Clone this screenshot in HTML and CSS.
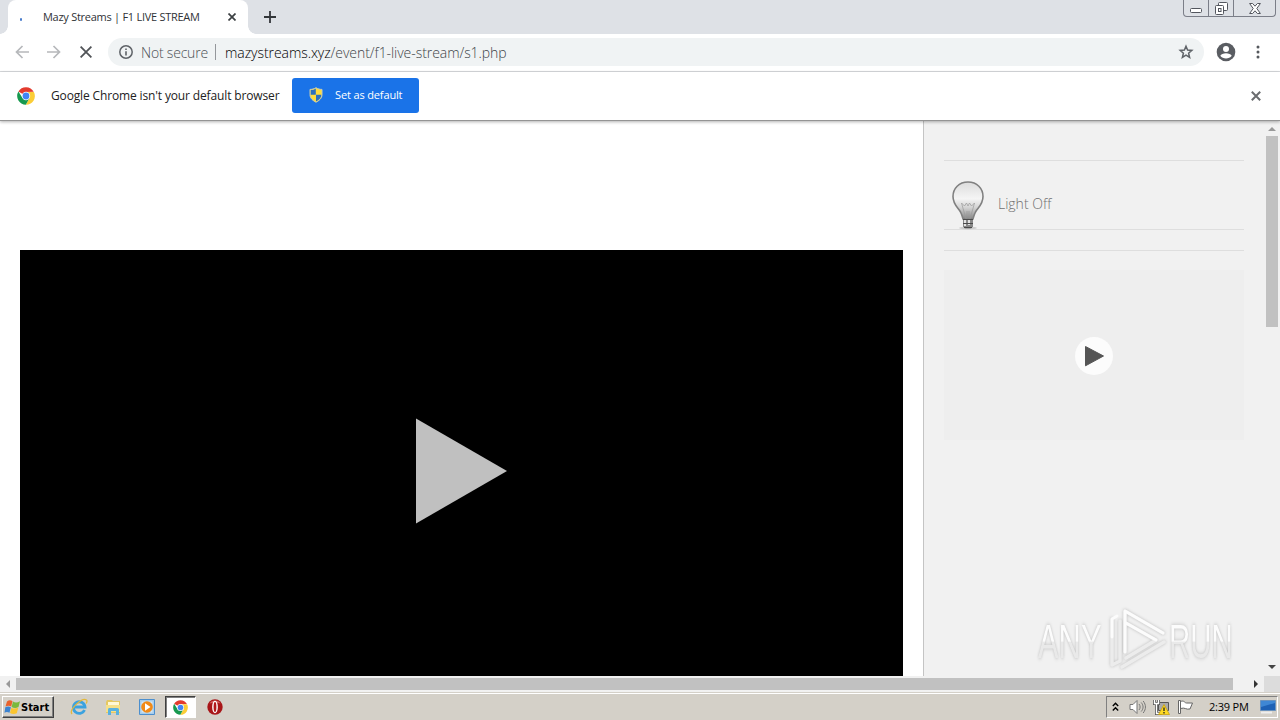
FILE: index.html
```html
<!DOCTYPE html>
<html lang="en">
<head>
  <meta charset="UTF-8" />
  <title>Mazy Streams | F1 LIVE STREAM</title>
  <link rel="stylesheet" href="styles.css">
</head>
<body>
  <svg class="defs" width="0" height="0">
    <symbol id="chrome" viewBox="0 0 18 18">
      <path fill="#e33b2e" d="M9 9L1.4 4.5A8.8 8.8 0 0 1 16.7 4.8L9 5z" />
      <path fill="#fbcd37" d="M9 5h7.9A8.8 8.8 0 0 1 8.8 17.8L12.6 11z" />
      <path fill="#17994f" d="M1.4 4.5A8.8 8.8 0 0 0 8.8 17.8L12.5 11 5.5 11z" />
      <circle cx="9" cy="9" r="4.2" fill="#fff" />
      <circle cx="9" cy="9" r="3.4" fill="#4285f4" />
    </symbol>
  </svg>

  <header class="tabstrip">
    <div class="tab">
      <span class="loading-dot"></span>
      <span class="tab-title">Mazy Streams | F1 LIVE STREAM</span>
      <svg class="tab-close" width="8" height="8" viewBox="0 0 8 8"><path d="M.5.5l7 7M7.500.5l-7 7" stroke="#3c4043" stroke-width="1.7" /></svg>
    </div>
    <svg class="new-tab" width="12" height="12" viewBox="0 0 12 12"><path d="M6 0v12M0 6h12" stroke="#33363a" stroke-width="1.8" /></svg>
    <div class="window-buttons">
      <span class="win-min"><svg width="12" height="5" viewBox="0 0 12 5"><rect x=".5" y=".5" width="11" height="4" rx="1" fill="#fff" stroke="#53565e" /></svg></span>
      <span class="win-max"><svg width="13" height="13" viewBox="0 0 13 13" fill="#fff" stroke="#53565e"><rect x="3.500" y=".5" width="9" height="8" rx="1" /><rect x=".5" y="3.500" width="8" height="9" rx="1" /><rect x="3.500" y="6.500" width="2.500" height="3" /></svg></span>
      <span class="win-close"><svg width="12" height="11" viewBox="0 0 12 11"><path d="M.6.5h3L6 3.200 8.400.5h3L7.800 5.500l3.600 5h-3L6 7.800l-2.400 2.700h-3l3.600-5z" fill="#fff" stroke="#53565e" /></svg></span>
    </div>
  </header>

  <div class="toolbar">
    <svg class="back" width="14" height="14" viewBox="0 0 14 14" fill="none" stroke="#b6b8bb" stroke-width="1.700"><path d="M14 7H1.500M7.500 1L1.500 7l6 6" /></svg>
    <svg class="forward" width="14" height="14" viewBox="0 0 14 14" fill="none" stroke="#b6b8bb" stroke-width="1.700"><path d="M0 7h12.500M6.500 1l6 6-6 6" /></svg>
    <svg class="stop" width="12" height="12" viewBox="0 0 12 12" stroke="#505357" stroke-width="1.800"><path d="M.6.6l10.800 10.800M11.400.6L.6 11.400" /></svg>
    <div class="omnibox">
      <svg class="info" width="14" height="14" viewBox="0 0 14 14"><circle cx="7" cy="7" r="6.200" fill="none" stroke="#5f6368" stroke-width="1.500" /><path d="M7 6.200v4.300M7 3.500v1.500" stroke="#5f6368" stroke-width="1.600" /></svg>
      <span class="not-secure">Not secure</span>
      <span class="separator"></span>
      <span class="url"><b>mazystreams.xyz</b>/event/f1-live-stream/s1.php</span>
      <svg class="star" width="16" height="16" viewBox="0 0 16 16"><path d="M8 2.200l1.600 3.900 4.200.3-3.200 2.800 1 4.100L8 11.100l-3.600 2.200 1-4.100-3.200-2.800 4.200-.3z" fill="none" stroke="#5f6368" stroke-width="1.500" /></svg>
    </div>
    <svg class="profile" width="20" height="20" viewBox="0 0 20 20"><circle cx="10" cy="10" r="9.300" fill="#5a5d62" /><circle cx="10" cy="7" r="3" fill="#fff" /><path d="M4.300 13.800c1.200-3.400 10.200-3.400 11.400 0-2.500 3.600-8.900 3.600-11.400 0z" fill="#fff" /></svg>
    <svg class="menu" width="4" height="14" viewBox="0 0 4 14" fill="#55585d"><circle cx="2" cy="2" r="1.500" /><circle cx="2" cy="7" r="1.500" /><circle cx="2" cy="12" r="1.500" /></svg>
  </div>

  <div class="infobar">
    <svg class="chrome-icon" width="18" height="18"><use href="#chrome" /></svg>
    <span class="infobar-text">Google Chrome isn't your default browser</span>
    <button class="default-button">
      <svg width="14" height="16" viewBox="0 0 14 16"><path d="M7 .7C5 2 3 2.400 1 2.400v5.300c0 3.700 3 6 6 7.500 3-1.500 6-3.800 6-7.500V2.400C11 2.400 9 2 7 .7z" fill="#ffdc3c" /><path d="M6.800 1.500v6.200H1.500V3C3.500 3 5.200 2.500 6.800 1.500zM7 7.700h5.500c-.2 3.200-2.500 5.300-5.500 6.800z" fill="#2c70bd" /><path d="M7 .7C5 2 3 2.400 1 2.400v5.300c0 3.700 3 6 6 7.500 3-1.500 6-3.800 6-7.500V2.400C11 2.400 9 2 7 .7z" fill="none" stroke="#c5ccb5" /></svg>
      <span>Set as default</span>
    </button>
    <svg class="infobar-close" width="10" height="10" viewBox="0 0 10 10"><path d="M.8.8l8.400 8.400M9.200.8L.8 9.200" stroke="#6a6c6f" stroke-width="2" /></svg>
  </div>

  <div class="viewport">
    <main class="page">
      <div class="player">
        <svg width="92" height="106" viewBox="0 0 92 106"><path d="M0 .5l91 52.500L0 105.500z" fill="#c0c0c0" /></svg>
      </div>
    </main>
    <aside class="sidebar">
      <div class="light-switch">
        <svg class="bulb" width="34" height="50" viewBox="0 0 34 50">
          <defs>
            <linearGradient id="glass" x1="0" y1="0" x2="0" y2="1">
              <stop offset="0" stop-color="#dcdcdc" />
              <stop offset=".45" stop-color="#f5f5f5" />
              <stop offset=".7" stop-color="#d2d2d2" />
              <stop offset="1" stop-color="#858585" />
            </linearGradient>
          </defs>
          <ellipse cx="17" cy="47" rx="9" ry="1.500" fill="#ccc" />
          <path d="M17 1C8 1 2 7.500 2 15.500c0 8 5 11 7.500 15.500 1.300 2.500 1.800 4.500 2.500 7h10c.7-2.500 1.200-4.500 2.500-7C27 26.500 32 23.500 32 15.500 32 7.500 26 1 17 1z" fill="url(#glass)" stroke="#808080" stroke-width="1.600" />
          <path d="M15 38l-4.500-16 3 3 2-3 1.500 3 1.500-3 2 3 3-3L19 38M16 38v-8M18 38v-8" fill="none" stroke="#999" stroke-width=".7" />
          <path d="M12 38h10v7.500l-2 2h-6l-2-2z" fill="#888" />
          <path d="M14 39v6M18 39v5" stroke="#e2e2e2" stroke-width="2" />
          <path d="M12 38.500h10M12 42.500h10M13 46.500h8" stroke="#4a4a4a" stroke-width="1.200" />
        </svg>
        <span>Light Off</span>
      </div>
      <div class="ad">
        <svg width="38" height="38" viewBox="0 0 38 38"><circle cx="19" cy="19" r="19" fill="#fcfcfc" /><path d="M10.500 9.500l18 9.500-18 9.800z" fill="#555" stroke="#555" stroke-linejoin="round" /></svg>
      </div>
      <div class="watermark">
        <span>ANY</span>
        <svg width="60" height="64" viewBox="0 0 60 64" fill="none" stroke-linejoin="round" stroke-linecap="round">
          <g class="mark-edge" stroke="#ececec" stroke-width="3.500">
            <path d="M17 45V4l38 22M18 16l30 17-30 18M4 12v46l8-4V14M14 60l42-25" />
          </g>
          <path d="M17 45V4l38 22M4 30V12l5-3M18 16l30 17" stroke="#fcfcfc" stroke-width="2.800" />
        </svg>
        <span class="run">RUN</span>
      </div>
    </aside>
    <div class="vscroll">
      <svg width="8" height="4" viewBox="0 0 8 4"><path d="M0 4l4-4 4 4z" fill="#999" /></svg>
      <div class="vthumb"></div>
      <svg class="scroll-down" width="8" height="4" viewBox="0 0 8 4"><path d="M0 0l4 4 4-4z" fill="#444" /></svg>
    </div>
  </div>

  <div class="hscroll">
    <svg width="4" height="8" viewBox="0 0 4 8"><path d="M4 0L0 4l4 4z" fill="#999" /></svg>
    <div class="hthumb"></div>
    <svg class="scroll-right" width="4" height="8" viewBox="0 0 4 8"><path d="M0 0l4 4-4 4z" fill="#333" /></svg>
    <div class="corner"></div>
  </div>

  <footer class="taskbar">
    <div class="start">
      <svg width="17" height="16" viewBox="0 0 16 16"><path d="M2.500 2.500C4.500 1 6.200 1 8 2.300L6.700 7.500C4.900 6.300 3 6.500 1 7.500z" fill="#e9622c" /><path d="M8.500 2.600c2 1.200 4.500 1.200 7-.4L14 8c-2.300 1.400-4.800 1.200-6.900 0z" fill="#7ab93c" /><path d="M.8 8.200c2-1 3.700-1 5.600 0L5 13.800c-1.800-1-3.500-1-5 0z" fill="#3c83d0" /><path d="M6.900 8.700c2 1.200 4.400 1.100 6.900-.2l-1.500 5.700c-2.300 1.200-4.800 1-6.800-.2z" fill="#fbc52f" /></svg>
      <span>Start</span>
    </div>
    <div class="quick">
      <svg width="18" height="18" viewBox="0 0 18 18" fill="none"><path d="M14.500 12A5.800 5.800 0 1 1 15 9H5" stroke="#3ba2df" stroke-width="2.800" /><path d="M2 16C-1.500 12 12-1 16.500 2c1 .8.500 2-.3 3.500" stroke="#e3b83c" stroke-width="1.300" /></svg>
      <svg width="18" height="18" viewBox="0 0 18 18"><path d="M2 4l1-2h5l1 1h7v12H2z" fill="#e5c862" /><path d="M4 4h11v4H4z" fill="#fff8d6" /><path d="M2 7h14v7H2z" fill="#f5e08a" /><path d="M4 17v-5c0-2 1-2 2-2h7c2 0 2 1 2 2v5h-3v-4H7v4z" fill="#59b1df" /></svg>
      <svg width="18" height="18" viewBox="0 0 18 18"><path d="M1.500 1.500h15v15h-15z" fill="#a6cdec" stroke="#4c8fce" /><path d="M3.500 3.500h11v11h-11z" fill="#d4e6f5" /><circle cx="9" cy="9" r="5.800" fill="#f18a17" /><path d="M7 5.300L12.500 9 7 12.700z" fill="#fff" /></svg>
      <div class="task-active"><svg width="15" height="15"><use href="#chrome" /></svg></div>
      <svg width="18" height="18" viewBox="0 0 18 18"><circle cx="9" cy="9" r="7.700" fill="#a81518" /><path d="M3.500 5.500c2-4 9-4 11 0-3-1-8-1-11 0z" fill="#d35a5a" /><path d="M9 2.800c3.800 0 3.800 12.400 0 12.400S5.200 2.800 9 2.800z" fill="#fff" /><ellipse cx="9" cy="9" rx="1.400" ry="5" fill="#b3171b" /></svg>
    </div>
    <div class="tray">
      <svg class="chevrons" width="7" height="10" viewBox="0 0 7 10" fill="none" stroke="#000" stroke-width="1.400"><path d="M.8 4l2.700-2.700L6.200 4M.8 8.500l2.700-2.700 2.700 2.700" /></svg>
      <svg class="sound" width="17" height="16" viewBox="0 0 17 16" fill="#fff" stroke="#777"><path d="M1 5.500h3L8 1.500v13l-4-4H1z" /><path d="M10 5c1.500 2 1.500 4 0 6M12.200 3.500c2.500 3 2.500 6 0 9M14.200 2c3 4 3 8 0 12" fill="none" /></svg>
      <svg class="network" width="17" height="16" viewBox="0 0 17 16"><path d="M5.500 3.500h10v8h-10z" fill="#aaa" stroke="#555" /><path d="M1.500 1v3.500h4V1M3.500 4.500v10h5" fill="none" stroke="#555" stroke-width="3" /><path d="M1.500 1v3.500h4V1M3.500 4.500v10h5" fill="none" stroke="#fff" stroke-width="1.400" /><path d="M11 5.500l5.500 10h-11z" fill="#ffda22" stroke="#c69c00" stroke-width=".7" /><path d="M11 8.500v3.500M11 13v1.500" stroke="#222" stroke-width="1.300" /></svg>
      <svg class="flag" width="17" height="16" viewBox="0 0 17 16"><path d="M1.500 1.500h2v13h-2zM3.500 2.500c4-1.500 4 1.500 6 1.500h6L13 10c-4 1-5-2-9.500-.5z" fill="#fff" stroke="#666" /></svg>
      <span class="clock">2:39 PM</span>
      <svg class="desktop" width="16" height="14" viewBox="0 0 16 14"><path d="M.5.5h15v10H.5z" fill="#1e61b5" stroke="#6c93bd" /><path d="M1 1h14v2L1 7z" fill="#3f87d4" /><path d="M1 12.500h11" stroke="#eee" stroke-width="2" /></svg>
    </div>
  </footer>
</body>
</html>
```

FILE: styles.css
```css
* {
  margin: 0;
  padding: 0;
  box-sizing: border-box;
}

body {
  width: 1280px;
  height: 720px;
  overflow: hidden;
  display: flex;
  flex-direction: column;
  background: #fff;
  font-family: "Open Sans", "Noto Sans", sans-serif;
  font-size: 11px;
  white-space: nowrap;
}

svg {
  display: block;
  flex-shrink: 0;
}

.defs {
  position: absolute;
}

.tabstrip {
  height: 34px;
  flex-shrink: 0;
  background: #dee1e6;
  display: flex;
  padding-left: 8px;
}

.tab {
  position: relative;
  width: 240px;
  height: 34px;
  background: #fff;
  border-radius: 8px 8px 0 0;
  display: flex;
  align-items: center;
  padding-left: 12px;
}

.tab::before,
.tab::after {
  content: "";
  position: absolute;
  bottom: 0;
  width: 8px;
  height: 8px;
}

.tab::before {
  left: -8px;
  background: radial-gradient(circle at 0 0, #dee1e6 7.5px, #fff 8px);
}

.tab::after {
  right: -8px;
  background: radial-gradient(circle at 100% 0, #dee1e6 7.5px, #fff 8px);
}

.loading-dot {
  width: 2px;
  height: 3px;
  margin-top: 5px;
  border-radius: 1px;
  background: #4a7dcc;
}

.tab-title {
  width: 157px;
  margin: -1px 0 0 21px;
  color: #2f3236;
  letter-spacing: -0.27px;
}

.tab-close {
  margin-left: 28px;
}

.new-tab {
  margin: 11px 0 0 16px;
}

.window-buttons {
  display: flex;
  width: 93px;
  height: 17px;
  margin-left: auto;
  margin-right: 4px;
  border: 1px solid #7b7e88;
  border-top: 0;
  border-radius: 0 0 4px 4px;
}

.window-buttons span {
  display: flex;
  justify-content: center;
  align-items: center;
  border-right: 1px solid #7b7e88;
}

.win-min {
  width: 25px;
}

.win-min svg {
  margin-top: 4px;
}

.win-max {
  width: 25px;
}

.window-buttons .win-close {
  width: 41px;
  border-right: 0;
}

.toolbar {
  height: 38px;
  flex-shrink: 0;
  border-bottom: 1px solid #d9dbde;
  display: flex;
  align-items: center;
  padding: 0 0 1px 15px;
}

.forward {
  margin-left: 18px;
}

.stop {
  margin-left: 19px;
}

.omnibox {
  width: 1096px;
  height: 28px;
  margin-left: 16px;
  border-radius: 14px;
  background: #f0f3f4;
  display: flex;
  align-items: center;
  padding: 0 10px 0 11px;
  font-size: 14px;
  font-weight: 300;
}

.not-secure {
  width: 67px;
  margin-left: 8px;
  color: #4c5054;
  letter-spacing: -0.2px;
}

.separator {
  width: 1px;
  height: 16px;
  margin: 0 9px 0 7px;
  background: #94979b;
}

.url {
  color: #404448;
  letter-spacing: -0.06px;
}

.url b {
  font-weight: 300;
  color: #000;
}

.star {
  margin-left: auto;
}

.profile {
  margin-left: 12px;
}

.menu {
  margin-left: 20px;
}

.infobar {
  position: relative;
  z-index: 1;
  height: 49px;
  flex-shrink: 0;
  display: flex;
  align-items: center;
  padding: 0 19px 0 17px;
  background: #fff;
  border-bottom: 1px solid #949494;
  box-shadow: 0 1px 3px rgba(0, 0, 0, 0.3);
}

.infobar-text {
  width: 229px;
  margin: -2px 0 0 16px;
  font-size: 12px;
  letter-spacing: -0.14px;
  color: #222;
}

.default-button {
  width: 127px;
  height: 35px;
  margin: -2px 0 0 12px;
  border: 0;
  border-radius: 3px;
  background: #1a73e8;
  color: #fff;
  font: 11px "Open Sans", sans-serif;
  letter-spacing: -0.14px;
  display: flex;
  align-items: center;
  padding-left: 17px;
}

.default-button span {
  margin: -2px 0 0 12px;
}

.infobar-close {
  margin-left: auto;
}

.viewport {
  height: 555px;
  flex-shrink: 0;
  display: flex;
}

.page {
  width: 924px;
  padding: 129px 20px 0;
  border-right: 1px solid #c4c4c4;
}

.player {
  height: 426px;
  background: #000;
  display: flex;
  padding: 168px 0 0 396px;
}

.sidebar {
  position: relative;
  width: 340px;
  padding: 39px 20px 0;
  background: #f1f1f1;
}

.light-switch {
  height: 70px;
  border-top: 1px solid #dedede;
  border-bottom: 1px solid #dedede;
  display: flex;
  padding: 20px 0 0 7px;
  font-size: 14px;
  font-weight: 300;
  color: #707070;
}

.light-switch span {
  margin: 13px 0 0 13px;
}

.ad {
  height: 190px;
  margin-top: 20px;
  border-top: 1px solid #dedede;
  padding-top: 19px;
  background: #eee content-box;
  display: flex;
  justify-content: center;
}

.ad svg {
  margin-top: 67px;
}

.watermark {
  position: absolute;
  left: 114px;
  top: 488px;
  display: flex;
  align-items: center;
  font: 49px/64px "Liberation Sans", sans-serif;
}

/* text is squeezed, so its box is wider than the room it takes */
.watermark span {
  width: 120px;
  margin-right: -50px;
  transform: scaleX(0.63);
  transform-origin: left;
  color: transparent;
  background: linear-gradient(#fcfcfc 50%, #e9e9e9 52%);
  background-clip: text;
  filter: drop-shadow(0 0 2px #bbb);
}

.watermark .run {
  transform: scaleX(0.6);
}

.mark-edge {
  filter: drop-shadow(0 0 1.5px #bbb);
}

.watermark svg {
  margin: -4px 1px 0 0;
  overflow: visible;
}

.vscroll {
  width: 16px;
  background: #f1f1f1;
  display: flex;
  flex-direction: column;
  align-items: center;
  padding: 6px 0 7px;
}

.vthumb {
  width: 12px;
  height: 191px;
  margin-top: 5px;
  background: #c1c1c1;
}

.scroll-down {
  margin-top: auto;
}

.hscroll {
  height: 16px;
  flex-shrink: 0;
  background: #f1f1f1;
  display: flex;
  align-items: center;
  padding-left: 6px;
}

.hthumb {
  width: 1217px;
  height: 12px;
  margin-left: 6px;
  background: #c1c1c1;
}

.scroll-right {
  margin-left: 21px;
}

.corner {
  width: 16px;
  height: 16px;
  margin-left: auto;
  background: #dcdcdc;
}

.taskbar {
  height: 28px;
  flex-shrink: 0;
  background: #d4d0c8;
  border-top: 1px solid #d4d0c8;
  box-shadow: inset 0 1px #fff;
  display: flex;
  align-items: flex-start;
  padding: 3px 2px 0;
}

.start {
  width: 52px;
  height: 22px;
  border: 1px solid;
  border-color: #fff #404040 #404040 #fff;
  box-shadow: inset -1px -1px #808080;
  display: flex;
  align-items: center;
  padding-left: 1px;
  font: bold 11px "DejaVu Sans Condensed", "DejaVu Sans", sans-serif;
}

.quick {
  display: flex;
  align-items: center;
  height: 22px;
  margin-left: 16px;
}

.quick > svg {
  margin-right: 16px;
}

.task-active {
  width: 31px;
  height: 22px;
  margin: 0 10px 0 -7px;
  background: #fff;
  border: 1px solid;
  border-color: #404040 #fff #fff #404040;
  box-shadow: inset 1px 1px #808080;
  display: flex;
  align-items: center;
  justify-content: center;
}

.tray {
  width: 172px;
  height: 22px;
  margin-left: auto;
  border: 1px solid;
  border-color: #808080 #fff #fff #808080;
  display: flex;
  align-items: center;
  padding-left: 5px;
}

.sound {
  margin-left: 10px;
}

.network {
  margin-left: 7px;
}

.flag {
  margin-left: 7px;
}

.clock {
  width: 40px;
  margin: -1px 0 0 15px;
  letter-spacing: -0.2px;
}

.desktop {
  margin-left: 11px;
}
```
